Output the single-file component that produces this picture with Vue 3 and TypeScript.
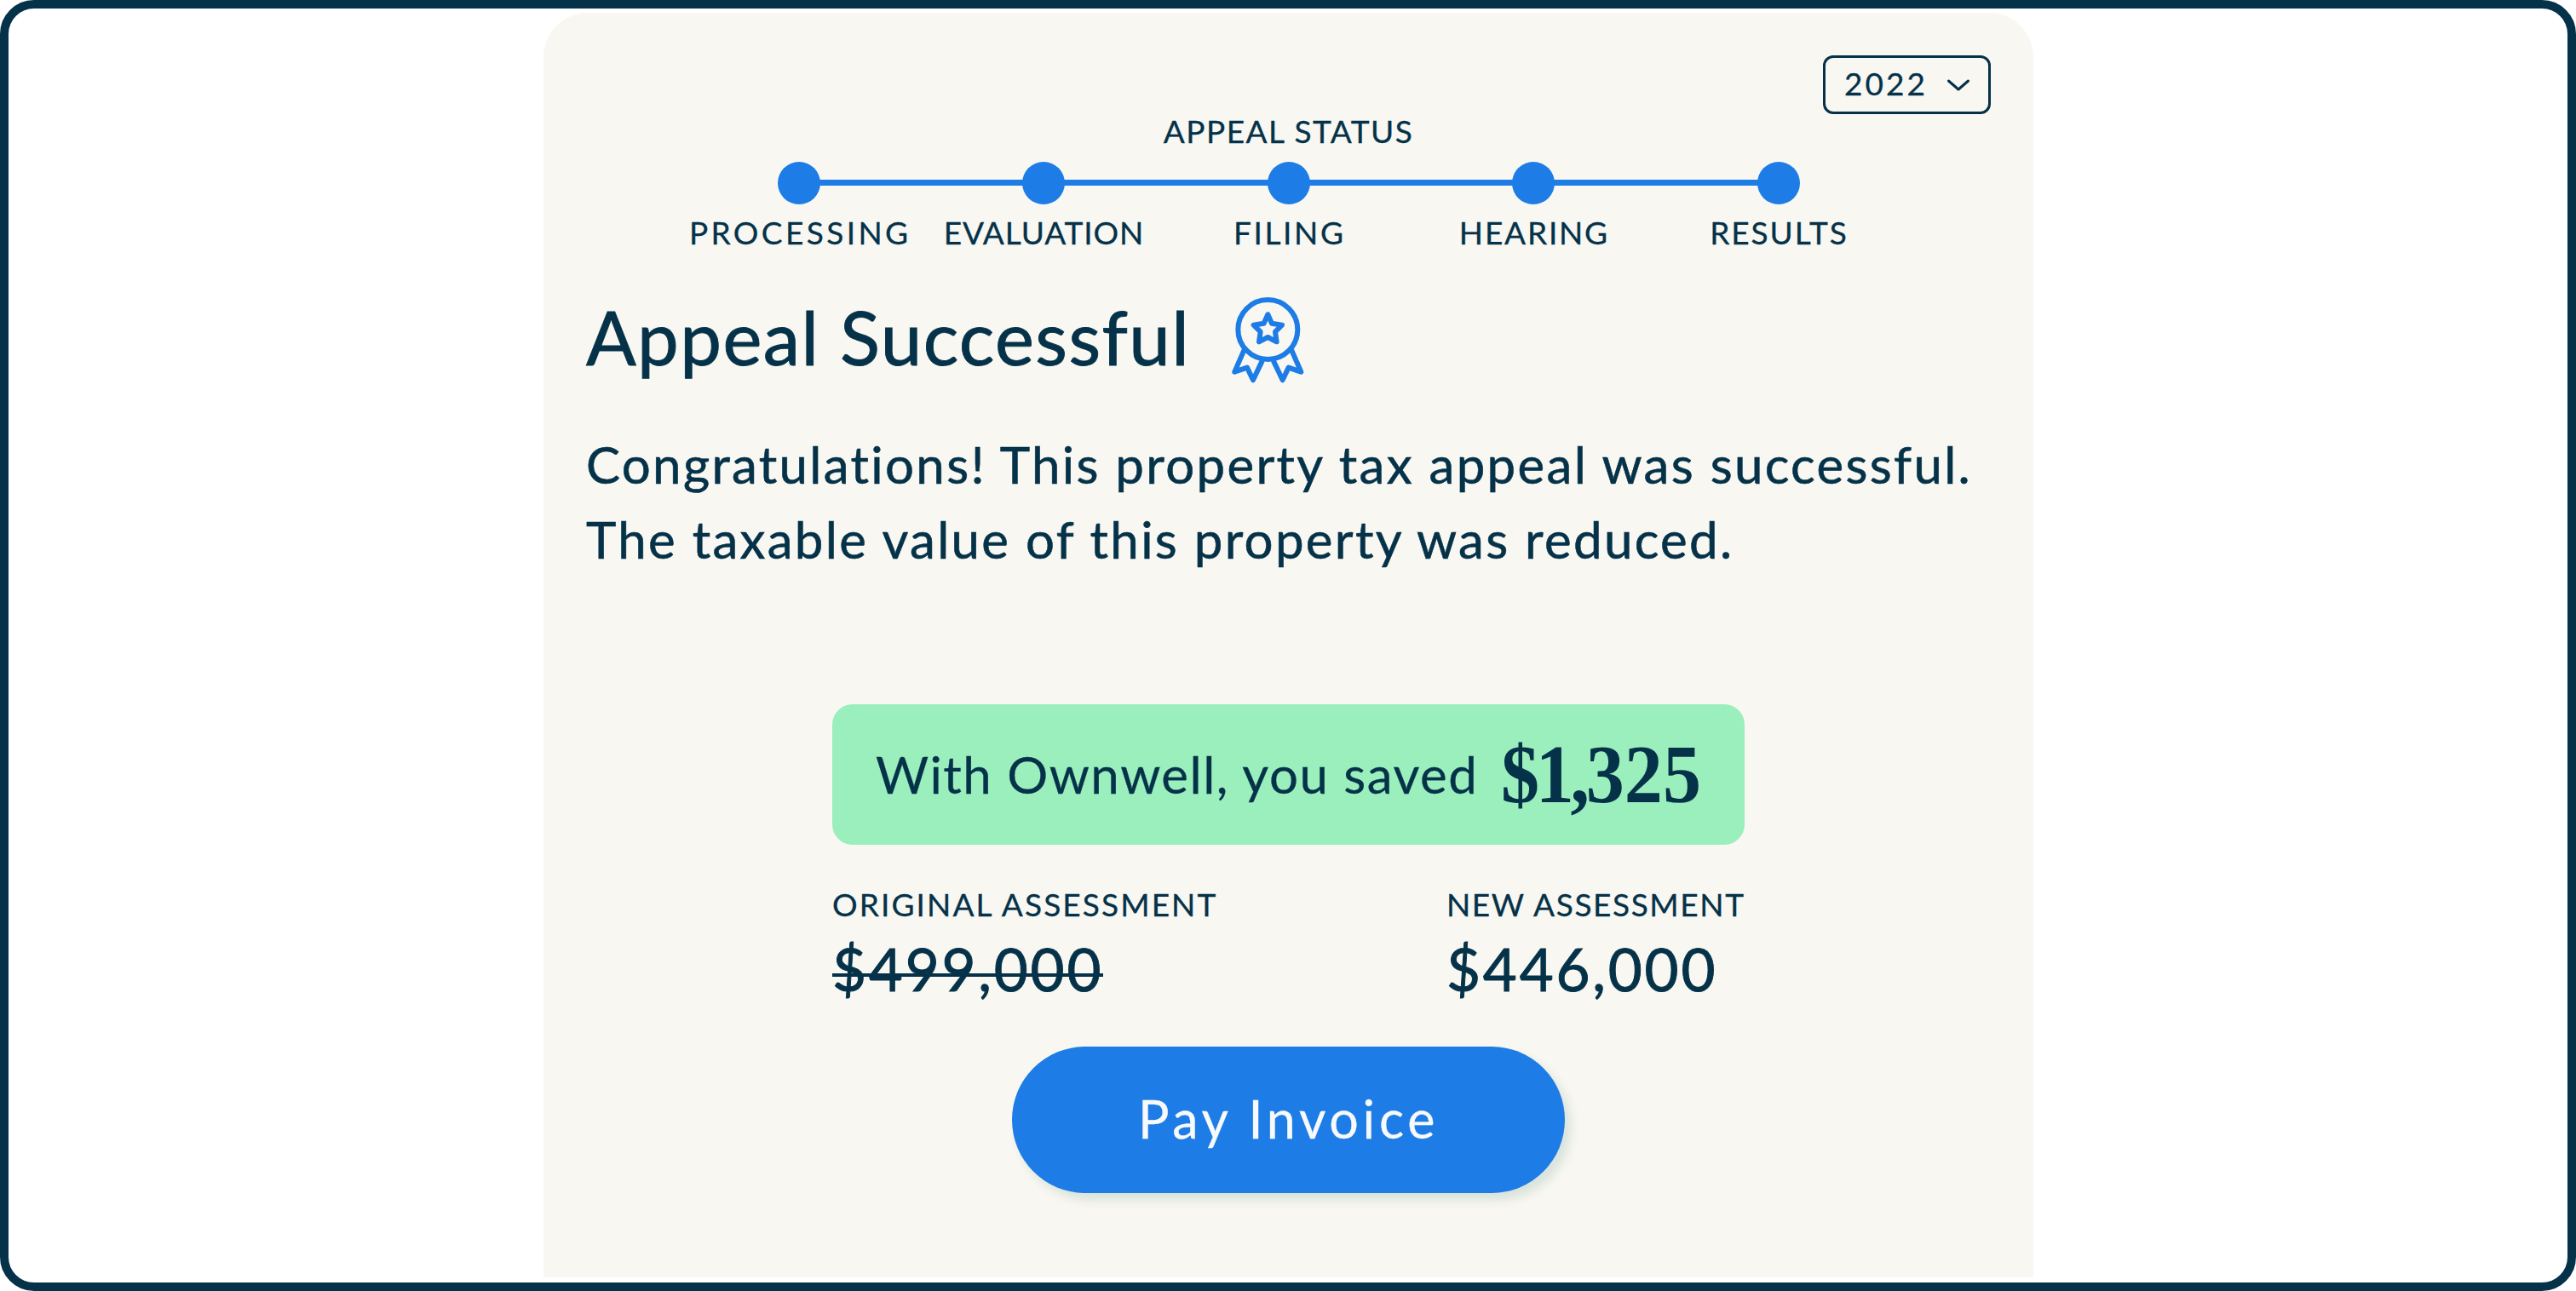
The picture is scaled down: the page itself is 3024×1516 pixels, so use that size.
<script setup lang="ts">
interface Step {
  label: string
  tracking: number
}

const year = '2022'

const steps: Step[] = [
  { label: 'PROCESSING', tracking: 3.4 },
  { label: 'EVALUATION', tracking: 0.9 },
  { label: 'FILING', tracking: 2.6 },
  { label: 'HEARING', tracking: 1.8 },
  { label: 'RESULTS', tracking: 1.9 },
]
</script>

<template>
  <div class="frame">
    <main class="card">
      <div class="toolbar">
        <button class="year" type="button">
          <span class="year-text">{{ year }}</span>
          <svg class="chevron" viewBox="0 0 28 16" fill="none">
            <path d="M2.5 3 L14 13 L25.5 3" stroke="currentColor" stroke-width="3" stroke-linecap="round" stroke-linejoin="round" />
          </svg>
        </button>
      </div>

      <section class="status">
        <div class="status-title">APPEAL STATUS</div>
        <ol class="steps">
          <li v-for="step in steps" :key="step.label" class="step">
            <span class="dot"></span>
            <span class="step-label" :style="{ letterSpacing: step.tracking + 'px', marginRight: -step.tracking + 'px' }">{{ step.label }}</span>
          </li>
        </ol>
      </section>

      <div class="heading">
        <h1>Appeal Successful</h1>
        <svg class="award" viewBox="78 54 256 306" fill="none" stroke="currentColor" stroke-width="18" stroke-linecap="round" stroke-linejoin="round">
          <circle cx="205" cy="171" r="105" />
          <path d="M205 118 L219 149 L255 155 L231 179 L236 214 L205 198 L174 214 L179 179 L155 155 L191 149 Z" />
          <path d="M121 244 L88 320 L132 305 L153 349 L184 284" />
          <path d="M289 244 L322 320 L278 305 L257 349 L226 284" />
        </svg>
      </div>

      <p class="message">
        Congratulations! This property tax appeal was successful.<br />
        The taxable value of this property was reduced.
      </p>

      <section class="summary">
        <div class="banner">
          <span class="banner-text">With Ownwell, you saved</span>
          <strong class="amount"><span class="amount-lead">$1,</span>325</strong>
        </div>
        <div class="assessments">
          <div>
            <div class="label original">ORIGINAL ASSESSMENT</div>
            <div class="value"><s>$499,000</s></div>
          </div>
          <div>
            <div class="label new">NEW ASSESSMENT</div>
            <div class="value">$446,000</div>
          </div>
        </div>
      </section>

      <button class="pay" type="button">Pay Invoice</button>
    </main>
  </div>
</template>

<style>
body {
  margin: 0;
  background: #ffffff;
}
</style>

<style scoped>
.frame {
  box-sizing: border-box;
  width: 3024px;
  height: 1516px;
  padding: 5px 0 6px 628px;
  border: 10px solid #053249;
  border-radius: 40px;
  background: #ffffff;
  color: #053249;
  font-family: "Lato", sans-serif;
  -webkit-text-stroke: 0.3px currentColor;
}

.card {
  box-sizing: border-box;
  display: flex;
  flex-direction: column;
  width: 1749px;
  height: 1485px;
  padding: 50px 50px 0;
  border-radius: 52px 52px 0 0;
  background: #f8f7f1;
}

.toolbar {
  display: flex;
  justify-content: flex-end;
}

.year {
  box-sizing: border-box;
  display: flex;
  align-items: center;
  gap: 22px;
  width: 197px;
  height: 69px;
  padding: 0 0 0 22px;
  border: 3px solid #053249;
  border-radius: 12px;
  background: transparent;
  color: inherit;
  font: 37px/44px "Lato", sans-serif;
}

.year-text {
  margin-top: -3px;
  letter-spacing: 3px;
}

.chevron {
  width: 28px;
  height: 16px;
}

.status {
  margin-top: -2px;
}

.status-title {
  font-size: 37px;
  line-height: 44px;
  letter-spacing: 1.5px;
  text-align: center;
}

.steps {
  display: flex;
  justify-content: center;
  margin: 14px 0 0;
  padding: 0;
  list-style: none;
}

.step {
  position: relative;
  display: flex;
  flex-direction: column;
  align-items: center;
  gap: 11px;
  width: 287.5px;
}

.step + .step::before {
  content: "";
  position: absolute;
  top: 21px;
  right: 50%;
  width: 100%;
  height: 7px;
  background: #1d7ce6;
}

.dot {
  width: 50px;
  height: 50px;
  border-radius: 50%;
  background: #1d7ce6;
}

.step-label {
  font-size: 37px;
  line-height: 44px;
  white-space: nowrap;
}

.heading {
  display: flex;
  align-items: flex-start;
  gap: 49px;
  height: 106px;
  margin-top: 48.5px;
}

h1 {
  margin: 0;
  font-size: 87px;
  font-weight: 400;
  line-height: 104px;
  letter-spacing: 1.4px;
  -webkit-text-stroke-width: 0.9px;
}

.award {
  width: 85.3px;
  height: 102px;
  margin-top: 4px;
  color: #1d7ce6;
}

.message {
  margin: 52.5px 0 0;
  font-size: 60px;
  line-height: 87.5px;
  letter-spacing: 2.3px;
  white-space: nowrap;
  -webkit-text-stroke-width: 0.6px;
}

.summary {
  align-self: center;
  width: 1071px;
  margin-top: 149.5px;
}

.banner {
  box-sizing: border-box;
  display: flex;
  align-items: center;
  gap: 27px;
  height: 165.5px;
  padding-left: 51px;
  border-radius: 24px;
  background: #9aefbc;
  white-space: nowrap;
}

.banner-text {
  margin-top: -1px;
  font-size: 60px;
  line-height: 72px;
  letter-spacing: 1.5px;
}

/* Condensed slightly to give the figure its narrow display look. */
.amount {
  display: inline-block;
  font: 700 98px/110px "Liberation Serif", serif;
  transform: scaleX(0.92);
  transform-origin: left center;
  -webkit-text-stroke-width: 0;
}

.amount-lead {
  letter-spacing: -4.7px;
}

.assessments {
  display: flex;
  justify-content: space-between;
  margin-top: 48px;
}

.label {
  font-size: 37px;
  line-height: 44px;
  white-space: nowrap;
}

.original {
  letter-spacing: 2.1px;
}

.new {
  width: 350px;
  letter-spacing: 1.6px;
}

.value {
  margin-top: 12px;
  font-size: 69px;
  line-height: 83px;
  letter-spacing: 2.8px;
  -webkit-text-stroke-width: 1px;
}

.value s {
  position: relative;
  text-decoration: none;
}

/* Strike rule sits a little below the font's own line-through position. */
.value s::after {
  content: "";
  position: absolute;
  top: 47px;
  left: 0;
  width: 100%;
  height: 4px;
  background: currentColor;
}

.pay {
  align-self: center;
  width: 649px;
  height: 172px;
  margin-top: 50px;
  padding: 0 0 2px;
  border: 0;
  border-radius: 86px;
  background: #1d7ce6;
  box-shadow: 7px 8px 12px rgba(5, 90, 80, 0.13);
  color: #f8f9fa;
  font: 61px/74px "Lato", sans-serif;
  letter-spacing: 4.7px;
}
</style>
